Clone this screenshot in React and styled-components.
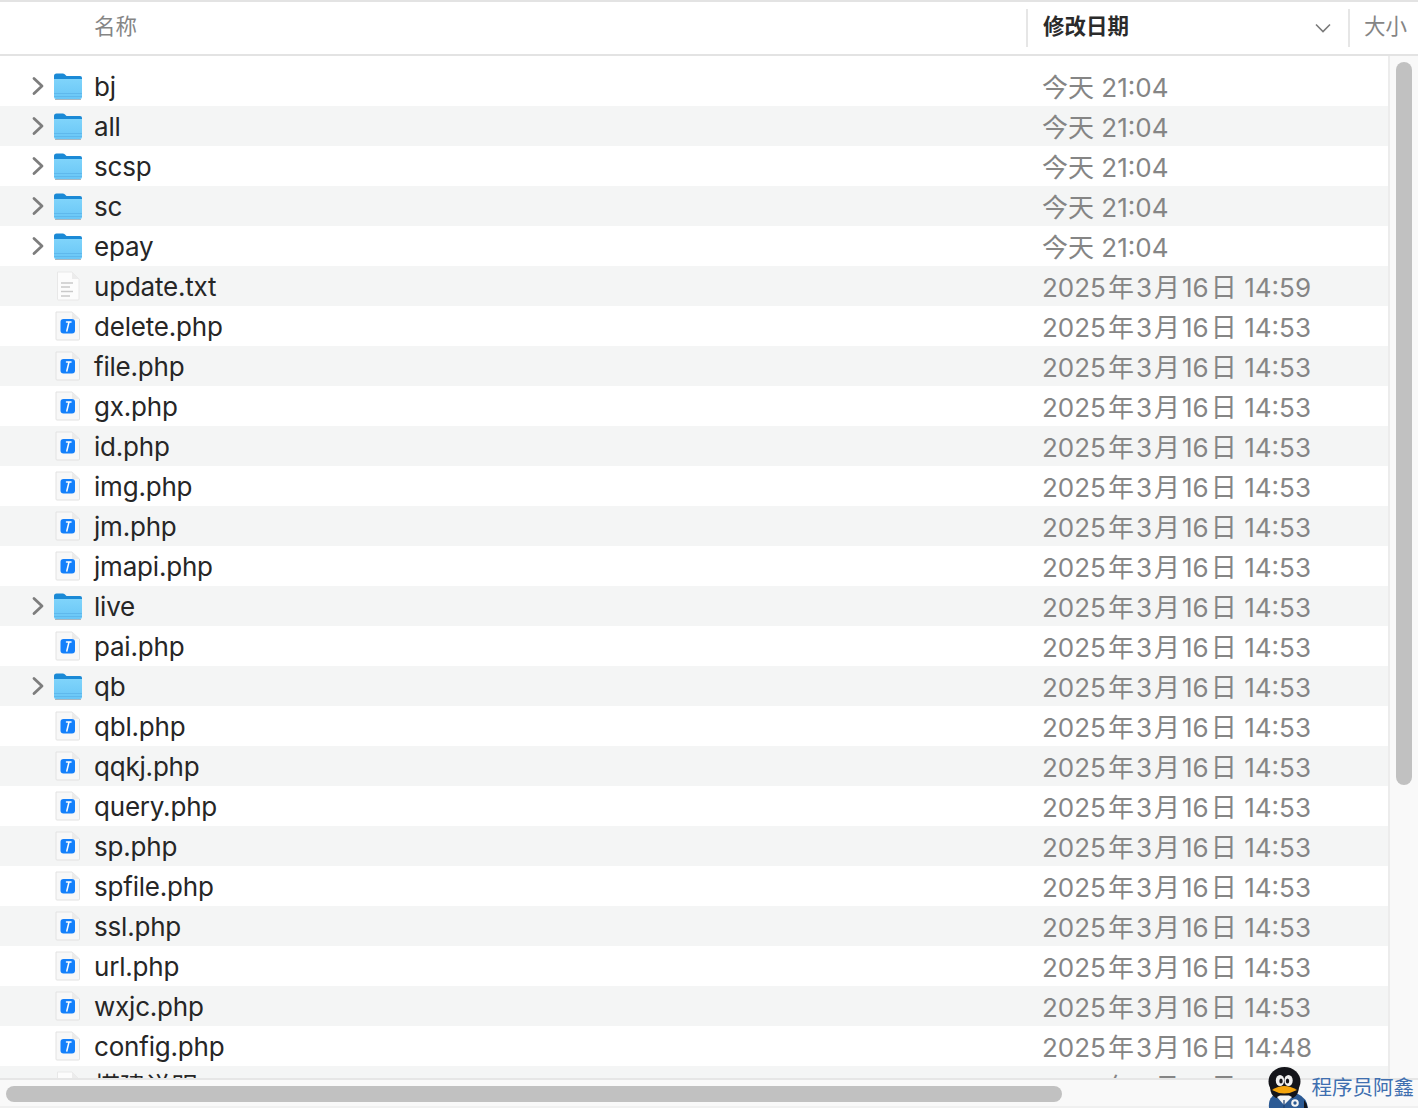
import React from "react";
import styled, { createGlobalStyle } from "styled-components";

const Global = createGlobalStyle`
  html, body { margin: 0; padding: 0; background: #fff; }
  body { font-family: Inter, "Noto Sans CJK SC", sans-serif; overflow: hidden; }
`;

const Window = styled.div`
  position: relative;
  width: 1418px;
  height: 1108px;
  display: flex;
  flex-direction: column;
  overflow: hidden;
  background: #fff;
`;

const Header = styled.div`
  flex: none;
  height: 56px;
  box-sizing: border-box;
  display: flex;
  align-items: center;
  border-top: 2px solid #e3e3e3;
  border-bottom: 2px solid #e3e3e3;
  font-size: 21.5px;
  font-family: "Noto Sans CJK SC", sans-serif;
`;

const HeaderCell = styled.div`
  height: 38px;
  display: flex;
  align-items: center;
  box-sizing: border-box;
  flex: ${(p) => p.$flex || "none"};
  width: ${(p) => p.$width || "auto"};
  padding-left: ${(p) => p.$pad || "0"};
  padding-bottom: 7px;
  border-left: ${(p) => (p.$divider ? "2px solid #e6e6e6" : "none")};
  color: ${(p) => (p.$active ? "#2b2b2b" : "#858585")};
  font-weight: ${(p) => (p.$active ? 700 : 400)};
  justify-content: space-between;
`;

const SortChevron = styled.svg`
  width: 18px;
  height: 12px;
  margin: 7px 16px 0 0;
`;

const Body = styled.div`
  flex: 1;
  min-height: 0;
  display: flex;
`;

const List = styled.div`
  flex: 1;
  min-width: 0;
  padding-top: 10px;
  overflow: hidden;
`;

const Row = styled.div`
  height: 40px;
  display: flex;
  align-items: center;
  background: ${(p) => (p.$alt ? "#f4f5f5" : "#fff")};
`;

const Disclosure = styled.div`
  flex: none;
  width: 52px;
  height: 40px;
  display: flex;
  align-items: center;
  justify-content: flex-end;
  padding-right: 8px;
  box-sizing: border-box;
`;

const IconSlot = styled.div`
  flex: none;
  width: 32px;
  margin-right: 10px;
  height: 40px;
  display: flex;
  align-items: center;
  justify-content: center;
`;

const Name = styled.div`
  flex: none;
  width: 948px;
  padding-top: 2px;
  font-size: 26px;
  line-height: 38px;
  letter-spacing: -0.2px;
  color: #262626;
  white-space: nowrap;
  font-family: Inter, "Noto Sans CJK SC", sans-serif;
`;

const DateText = styled.div`
  padding-top: 1px;
  font-size: 26px;
  line-height: 39px;
  color: #858585;
  white-space: nowrap;
  font-family: Inter, "Noto Sans CJK SC", sans-serif;
`;

const Cjk = styled.span`
  margin: 0 ${(p) => p.$after || "2px"} 0 ${(p) => p.$before || "2px"};
  font-family: "Noto Sans CJK SC", sans-serif;
`;

const VTrack = styled.div`
  flex: none;
  width: 16px;
  border-left: 2px solid #ececec;
  background: #f9f9f9;
  padding: 6px 6px 0 6px;
`;

const VThumb = styled.div`
  width: 16px;
  height: 723px;
  border-radius: 8px;
  background: #c1c1c1;
`;

const HTrack = styled.div`
  flex: none;
  height: 30px;
  box-sizing: border-box;
  border-top: 2px solid #e6e6e6;
  border-bottom: 2px solid #f0f0f0;
  background: #f9f9f9;
  padding: 6px 0 0 6px;
`;

const HThumb = styled.div`
  width: 1056px;
  height: 16px;
  border-radius: 8px;
  background: #c1c1c1;
`;

const Watermark = styled.div`
  position: absolute;
  right: 4px;
  bottom: 0;
  display: flex;
  align-items: flex-end;
  gap: 4px;
`;

const WatermarkText = styled.span`
  font-family: "Noto Sans CJK SC", sans-serif;
  font-size: 20.5px;
  line-height: 30px;
  padding-bottom: 7px;
  color: #3f6fb0;
`;

const Chevron = () => (
  <svg width="12" height="20" viewBox="0 0 12 20">
    <path d="M2 2.5 L10 10 L2 17.5" fill="none" stroke="#7d7d7d" strokeWidth="2.8" strokeLinecap="round" strokeLinejoin="round" />
  </svg>
);

const Folder = ({ id }) => (
  <svg width="30" height="28" viewBox="0 0 30 28">
    <defs>
      <linearGradient id={id} x1="0" y1="0" x2="0" y2="1">
        <stop offset="0" stopColor="#7fd4fb" />
        <stop offset="1" stopColor="#69c6f6" />
      </linearGradient>
    </defs>
    <path d="M1 4 Q1 1.5 3.5 1.5 L10 1.5 Q11.5 1.5 12.5 3 L13.5 4 L27 4 Q29 4 29 6 L29 10 L1 10 Z" fill="#1b8ad6" />
    <path d="M1 7 L29 7 L29 25 Q29 27 27 27 L3 27 Q1 27 1 25 Z" fill={`url(#${id})`} />
    <rect x="1" y="21" width="28" height="1" fill="#5fb8ec" />
    <rect x="1" y="24" width="28" height="1" fill="#5fb8ec" />
    <rect x="2" y="27" width="26" height="1" fill="#a9b6bf" />
  </svg>
);

const TextFile = () => (
  <svg width="24" height="30" viewBox="0 0 24 30">
    <path d="M1.5 1 L16 1 L23 8 L23 28 Q23 29 22 29 L2.5 29 Q1.5 29 1.5 28 Z" fill="#fcfcfc" stroke="#e8e8e8" />
    <path d="M16 1 L16 8 L23 8 Z" fill="#ececec" />
    <path d="M5 12 H17 M5 16 H14 M5 20.5 H17 M5 25 H14" stroke="#c9c9c9" strokeWidth="1.7" />
  </svg>
);

const PhpFile = () => (
  <svg width="26" height="30" viewBox="0 0 26 30">
    <path d="M1 1 L17 1 L24.5 8 L24.5 28 Q24.5 29 23.5 29 L2 29 Q1 29 1 28 Z" fill="#f8f8f8" stroke="#e2e2e2" />
    <path d="M17 1 L17 8 L24.5 8 Z" fill="#ebebeb" />
    <rect x="5.5" y="8" width="14.5" height="14.5" rx="3" fill="#1480fb" />
    <path d="M11.5 11 H16 M14 11 L11.8 20" stroke="#fff" strokeWidth="1.5" strokeLinecap="round" fill="none" />
  </svg>
);

const Penguin = () => (
  <svg width="40" height="41" viewBox="0 0 40 41">
    <path d="M1 41 Q0 31 7 27 L30 27 Q39 31 40 41 Z" fill="#2c5a94" />
    <path d="M36 33 Q39 36 39.5 41 L36 41 Z" fill="#14151a" />
    <ellipse cx="16.5" cy="14.5" rx="16" ry="14.5" fill="#14151a" />
    <path d="M2 19 Q2 28 8 31 L25 31 Q31 28 31 19 Z" fill="#14151a" />
    <ellipse cx="12" cy="13.5" rx="4.2" ry="5.6" fill="#f2f2f2" />
    <ellipse cx="20.5" cy="13.5" rx="4.2" ry="5.6" fill="#f2f2f2" />
    <ellipse cx="13" cy="14" rx="1.7" ry="2.6" fill="#15151a" />
    <ellipse cx="19.5" cy="14" rx="1.7" ry="2.6" fill="#15151a" />
    <path d="M4 23 Q16 15 29 23 Q16 30 4 23 Z" fill="#f5a50d" />
    <path d="M9 30 L16 38 L24 30 L21 28.5 L12 28.5 Z" fill="#f4f4f4" />
    <path d="M16 33 L16 41" stroke="#1d3f6e" strokeWidth="1.2" />
    <circle cx="27" cy="36" r="3.8" fill="#f4f4f4" />
    <circle cx="27" cy="36" r="1.7" fill="#2c5a94" />
  </svg>
);

const rows = [
  ["bj", "folder", null],
  ["all", "folder", null],
  ["scsp", "folder", null],
  ["sc", "folder", null],
  ["epay", "folder", null],
  ["update.txt", "text", "14:59"],
  ["delete.php", "php", "14:53"],
  ["file.php", "php", "14:53"],
  ["gx.php", "php", "14:53"],
  ["id.php", "php", "14:53"],
  ["img.php", "php", "14:53"],
  ["jm.php", "php", "14:53"],
  ["jmapi.php", "php", "14:53"],
  ["live", "folder", "14:53"],
  ["pai.php", "php", "14:53"],
  ["qb", "folder", "14:53"],
  ["qbl.php", "php", "14:53"],
  ["qqkj.php", "php", "14:53"],
  ["query.php", "php", "14:53"],
  ["sp.php", "php", "14:53"],
  ["spfile.php", "php", "14:53"],
  ["ssl.php", "php", "14:53"],
  ["url.php", "php", "14:53"],
  ["wxjc.php", "php", "14:53"],
  ["config.php", "php", "14:48"],
  ["搭建说明", "text", "14:48"],
];

const FullDate = ({ time }) => (
  <DateText>
    2025<Cjk>年</Cjk>3<Cjk>月</Cjk>16<Cjk $after="7.5px">日</Cjk>{time}
  </DateText>
);

const TodayDate = () => (
  <DateText>
    <Cjk $before="0" $after="0">今天</Cjk> 21:04
  </DateText>
);

const Icon = ({ kind, id }) => {
  if (kind === "folder") return <Folder id={id} />;
  if (kind === "text") return <TextFile />;
  return <PhpFile />;
};

export default function App() {
  return (
    <Window>
      <Global />
      <Header>
        <HeaderCell $flex="1" $pad="94px">名称</HeaderCell>
        <HeaderCell $width="322px" $pad="15px" $divider $active>
          修改日期
          <SortChevron viewBox="0 0 18 12">
            <path d="M2 2.5 L9 9.5 L16 2.5" fill="none" stroke="#7a7a7a" strokeWidth="1.6" />
          </SortChevron>
        </HeaderCell>
        <HeaderCell $width="70px" $pad="14px" $divider>大小</HeaderCell>
      </Header>
      <Body>
        <List>
          {rows.map(([name, kind, time], i) => (
            <Row key={name} $alt={i % 2 === 1}>
              <Disclosure>{kind === "folder" && <Chevron />}</Disclosure>
              <IconSlot><Icon kind={kind} id={`folder-${i}`} /></IconSlot>
              <Name>{name}</Name>
              {time ? <FullDate time={time} /> : <TodayDate />}
            </Row>
          ))}
        </List>
        <VTrack><VThumb /></VTrack>
      </Body>
      <HTrack><HThumb /></HTrack>
      <Watermark>
        <Penguin />
        <WatermarkText>程序员阿鑫</WatermarkText>
      </Watermark>
    </Window>
  );
}
